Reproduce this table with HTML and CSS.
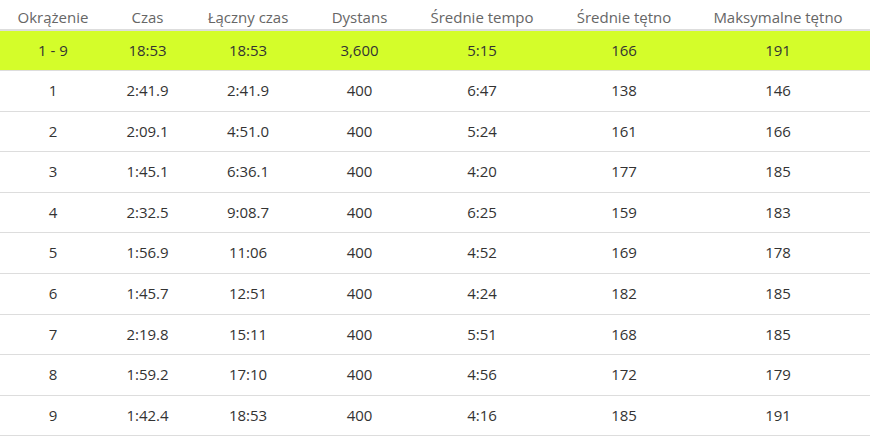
FILE: index.html
```html
<!DOCTYPE html>
<html lang="pl">
<head>
<meta charset="utf-8">
<title>Okrążenia</title>
<link rel="stylesheet" href="styles.css">
</head>
<body>
<table class="laps">
  <colgroup>
    <col class="c1"><col class="c2"><col class="c3"><col class="c4"><col class="c5"><col class="c6"><col class="c7">
  </colgroup>
  <thead>
    <tr><th>Okrążenie</th><th>Czas</th><th>Łączny czas</th><th>Dystans</th><th>Średnie tempo</th><th>Średnie tętno</th><th>Maksymalne tętno</th></tr>
  </thead>
  <tbody>
    <tr class="summary"><td>1 - 9</td><td>18:53</td><td>18:53</td><td>3,600</td><td>5:15</td><td>166</td><td>191</td></tr>
    <tr><td>1</td><td>2:41.9</td><td>2:41.9</td><td>400</td><td>6:47</td><td>138</td><td>146</td></tr>
    <tr><td>2</td><td>2:09.1</td><td>4:51.0</td><td>400</td><td>5:24</td><td>161</td><td>166</td></tr>
    <tr><td>3</td><td>1:45.1</td><td>6:36.1</td><td>400</td><td>4:20</td><td>177</td><td>185</td></tr>
    <tr><td>4</td><td>2:32.5</td><td>9:08.7</td><td>400</td><td>6:25</td><td>159</td><td>183</td></tr>
    <tr><td>5</td><td>1:56.9</td><td>11:06</td><td>400</td><td>4:52</td><td>169</td><td>178</td></tr>
    <tr><td>6</td><td>1:45.7</td><td>12:51</td><td>400</td><td>4:24</td><td>182</td><td>185</td></tr>
    <tr><td>7</td><td>2:19.8</td><td>15:11</td><td>400</td><td>5:51</td><td>168</td><td>185</td></tr>
    <tr><td>8</td><td>1:59.2</td><td>17:10</td><td>400</td><td>4:56</td><td>172</td><td>179</td></tr>
    <tr><td>9</td><td>1:42.4</td><td>18:53</td><td>400</td><td>4:16</td><td>185</td><td>191</td></tr>
  </tbody>
</table>
</body>
</html>
```
FILE: styles.css
```css
html, body {
  margin: 0;
  padding: 0;
  background: #fff;
}
body {
  font-family: "Open Sans", "Liberation Sans", sans-serif;
  font-size: 15px;
  color: #333;
}
.laps {
  width: 870px;
  border-collapse: collapse;
  table-layout: fixed;
}
.c1 { width: 106px; }
.c2 { width: 83px; }
.c3 { width: 118px; }
.c4 { width: 105px; }
.c5 { width: 140px; }
.c6 { width: 144px; }
.c7 { width: 174px; }
.laps th, .laps td {
  text-align: center;
  padding-left: 0;
  padding-right: 0;
  white-space: nowrap;
}
.laps th:last-child, .laps td:last-child {
  padding-right: 10px;
}
.laps th {
  font-weight: normal;
  color: #666;
  padding-top: 7px;
  padding-bottom: 2px;
  line-height: 20px;
  border-bottom: 2px solid #ddd;
}
.laps td {
  padding-top: 9px;
  padding-bottom: 9px;
  line-height: 21.6px;
  border-bottom: 1px solid #ddd;
}
.laps .summary td {
  background: #d4fd2a;
  padding-top: 8px;
  padding-bottom: 9px;
  line-height: 22px;
}
```
